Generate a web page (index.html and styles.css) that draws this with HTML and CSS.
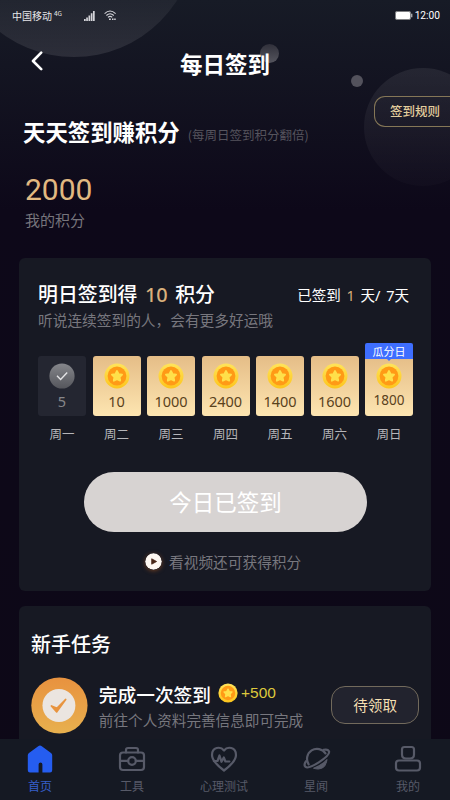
FILE: index.html
```html
<!DOCTYPE html>
<html lang="zh-CN">
<head>
<meta charset="utf-8">
<title>每日签到</title>
<link rel="stylesheet" href="styles.css">
</head>
<body>
<svg class="defs" width="0" height="0" aria-hidden="true">
  <defs>
    <linearGradient id="rim" x1="0" y1="0" x2="0" y2="1"><stop offset="0" stop-color="#ffe45a"/><stop offset="1" stop-color="#fdc51c"/></linearGradient>
    <linearGradient id="grey" x1="0" y1="0" x2="0" y2="1"><stop offset="0" stop-color="#85868b"/><stop offset="1" stop-color="#55565c"/></linearGradient>
    <linearGradient id="orange" x1="0" y1="0" x2="0" y2="1"><stop offset="0" stop-color="#e8923f"/><stop offset="1" stop-color="#e8b04e"/></linearGradient>
    <symbol id="coin" viewBox="0 0 26 26">
      <circle cx="13" cy="13" r="12.5" fill="url(#rim)"/>
      <circle cx="13" cy="13" r="9.4" fill="#ff9a16"/>
      <path d="M13 8l1.6 3.2 3.5.5-2.5 2.5.6 3.5-3.2-1.6-3.2 1.6.6-3.5-2.5-2.5 3.5-.5z" fill="#ffe04a" stroke="#ffe04a" stroke-width="1.8" stroke-linejoin="round"/>
    </symbol>
  </defs>
</svg>
<div class="screen">
  <div class="orb orb-big"></div>
  <div class="orb orb-small"></div>
  <div class="orb orb-dot"></div>
  <div class="orb orb-right"></div>

  <div class="status">
    <span class="carrier">中国移动</span><span class="net">4G</span>
    <svg class="signal" width="11" height="10" viewBox="0 0 11 10" fill="#d5d5da"><path d="M0 8h1.7v2H0zM2.2 6.5h1.7V10H2.2zM4.5 4.5h1.7V10H4.5zM6.8 2.3h1.7V10H6.8zM9 0h1.7v10H9z"/></svg>
    <svg class="wifi" width="13" height="11" viewBox="0 0 13 11" fill="none" stroke="#d5d5da" stroke-width="1.1"><path d="M.6 3.6Q6-1.6 11.6 3.6M2.4 5.5Q6 2 9.8 5.5M4 7.3Q6 5.5 8.2 7.3"/><path d="M5 9.2h1.8M8 9.2h1.5M10.2 9.2h1.5" stroke-width="1.6"/></svg>
    <svg class="battery" width="18" height="9" viewBox="0 0 18 9"><rect x=".4" y=".4" width="15.2" height="8.2" rx="1.5" fill="none" stroke="#aaa" stroke-width=".8"/><rect x="1" y="1" width="14" height="7" rx=".8" fill="#fff"/><path d="M16.3 2.7h1v3.6h-1z" fill="#ddd"/></svg>
    <span class="clock">12:00</span>
  </div>

  <header class="header">
    <svg class="back" width="12" height="20" viewBox="0 0 12 20"><path d="M10.2 1.6L2 10l8.2 8.2" fill="none" stroke="#fff" stroke-width="2.6" stroke-linecap="round" stroke-linejoin="round"/></svg>
    <h1>每日签到</h1>
  </header>

  <div class="rules-row"><a class="rules">签到规则</a></div>
  <div class="slogan"><h2>天天签到赚积分</h2><span>(每周日签到积分翻倍)</span></div>
  <div class="points">2000</div>
  <div class="points-label">我的积分</div>

  <section class="card checkin">
    <div class="card-top">
      <h3>明日签到得 <b>10</b> 积分</h3>
      <p class="progress">已签到 <b>1</b> 天/ 7天</p>
    </div>
    <p class="sub">听说连续签到的人，会有更多好运哦</p>
    <div class="days">
      <div class="day"><div class="tile done"><svg width="26" height="26" viewBox="0 0 26 26"><circle cx="13" cy="13" r="12.6" fill="url(#grey)"/><path d="M8 12.8l3.6 3.6 6.6-6.8" fill="none" stroke="#e4e4e6" stroke-width="1.4"/></svg><i>5</i></div><span>周一</span></div>
      <div class="day"><div class="tile"><svg width="26" height="26"><use href="#coin"/></svg><i>10</i></div><span>周二</span></div>
      <div class="day"><div class="tile"><svg width="26" height="26"><use href="#coin"/></svg><i>1000</i></div><span>周三</span></div>
      <div class="day"><div class="tile"><svg width="26" height="26"><use href="#coin"/></svg><i>2400</i></div><span>周四</span></div>
      <div class="day"><div class="tile"><svg width="26" height="26"><use href="#coin"/></svg><i>1400</i></div><span>周五</span></div>
      <div class="day"><div class="tile"><svg width="26" height="26"><use href="#coin"/></svg><i>1600</i></div><span>周六</span></div>
      <div class="day"><div class="tile last"><em class="tag">瓜分日</em><svg width="26" height="26"><use href="#coin"/></svg><i>1800</i></div><span>周日</span></div>
    </div>
    <button class="signed">今日已签到</button>
    <div class="video">
      <svg width="17" height="17" viewBox="0 0 17 17"><circle cx="8.5" cy="8.5" r="8.3" fill="#fff8f2"/><path d="M6.7 5.8v5.4l4.9-2.7z" fill="#4a2718" stroke="#4a2718" stroke-width=".8" stroke-linejoin="round"/></svg>
      <span>看视频还可获得积分</span>
    </div>
  </section>

  <section class="card tasks">
    <h3>新手任务</h3>
    <div class="task">
      <svg class="medal" width="57" height="57" viewBox="0 0 57 57"><circle cx="28.5" cy="28.5" r="28.2" fill="url(#orange)"/><circle cx="28" cy="28.5" r="16.5" fill="#ebe5e0"/><path d="M20.5 29l5.3 5.8L34.7 22.5l-8.7 8.9z" fill="#e8943f" stroke="#e8943f" stroke-width="1.8" stroke-linejoin="round"/></svg>
      <div class="task-text">
        <div class="task-title"><strong>完成一次签到</strong><svg width="20" height="20"><use href="#coin"/></svg><span>+500</span></div>
        <p>前往个人资料完善信息即可完成</p>
      </div>
      <button class="claim">待领取</button>
    </div>
  </section>

  <nav class="tabs">
    <a class="tab active"><svg width="30" height="30" viewBox="0 0 30 30"><path d="M13.2 2.2q1.8-1.3 3.6 0l9.2 6.7q1.2.9 1.2 2.4v15q0 2.2-2.2 2.2h-7.6v-8q0-2.1-1.9-2.1t-1.9 2.1v8H5q-2.2 0-2.2-2.2v-15q0-1.5 1.2-2.4z" fill="#255df0"/></svg><span>首页</span></a>
    <a class="tab"><svg width="30" height="30" viewBox="0 0 30 30"><g><path d="M9 8.5V6q0-2 2-2h8q2 0 2 2v2.5"/><rect x="3" y="8.5" width="24" height="17.5" rx="3"/><path d="M3 16.8h8.2M18.8 16.8H27"/><circle cx="15" cy="17" r="3.8"/></g></svg><span>工具</span></a>
    <a class="tab"><svg width="30" height="30" viewBox="0 0 30 30"><g><path d="M15 6.5C11.5 2 3 3 3 11c0 6 6 11 12 15.500 6-4.500 12-9.500 12-15.500 0-8-8.500-9-12-4.500z"/><path d="M4.800 17h3.700l2-5.500 2 6.300 2.300-4.300 1.600 4h4"/></g></svg><span>心理测试</span></a>
    <a class="tab"><svg width="30" height="30" viewBox="0 0 30 30"><g transform="translate(15.500 14) rotate(-33)"><path d="M-10 1A10 10 0 0 1 10 1"/><path d="M-10.500-3C-13-2-14.500 0-14 1.500-12.500 6 12.500 6 14 1.500 14.500 0 13-2 10.500-3"/><path class="solid" d="M-8 7Q0 9 8 7 4 11.500 0 11.500T-8 7z" stroke-width="1"/></g></svg><span>星闻</span></a>
    <a class="tab"><svg width="30" height="30" viewBox="0 0 30 30"><g><path d="M11.500 3h7q2.500 0 2.500 2.500v5q0 4-4 4h-4q-4 0-4-4v-5Q9 3 11.500 3z"/><rect x="3" y="16.500" width="24" height="10" rx="3"/></g></svg><span>我的</span></a>
  </nav>
</div>
</body>
</html>
```
FILE: styles.css
```css
* { box-sizing: border-box; margin: 0; padding: 0; }
body { background: #0d0817; font-family: "Noto Sans CJK SC", sans-serif; color: #fff; }
i, em { font-style: normal; }
.defs { position: absolute; }
.screen {
  position: relative;
  display: flex;
  flex-direction: column;
  width: 450px;
  height: 800px;
  overflow: hidden;
  background: linear-gradient(#171b26 0, #0d0819 210px, #0d0817 100%);
}
.screen > * { flex: none; position: relative; }
.screen > .orb { position: absolute; border-radius: 50%; }
.orb-big { left: -48px; top: -187px; width: 244px; height: 244px; background: linear-gradient(rgba(255,255,255,.03) 70%, rgba(255,255,255,.1)); }
.orb-small { left: 260px; top: 44px; width: 19px; height: 19px; background: linear-gradient(#30303a, #55555e); }
.orb-dot { left: 351px; top: 75px; width: 12px; height: 12px; background: #53525c; }
.orb-right { left: 364px; top: 68px; width: 118px; height: 118px; background: linear-gradient(rgba(255,255,255,.075), rgba(255,255,255,.015)); }

.status { display: flex; align-items: center; height: 30px; padding: 1px 10px 0 12px; font-size: 10px; line-height: 30px; color: #e6e6e9; }
.net { font-size: 6.5px; line-height: 8px; margin: 0 22px 5px 2px; }
.wifi { margin-left: 9px; }
.battery { margin-left: auto; margin-right: 2px; }
.clock { font-family: Roboto, sans-serif; font-size: 10.2px; color: #fff; }

.header { display: flex; align-items: center; justify-content: center; height: 66px; padding-bottom: 1px; }
.header .back { position: absolute; left: 31px; top: 21px; }
.header h1 { font-size: 22.5px; font-weight: 700; line-height: 32px; }

.rules-row { display: flex; justify-content: flex-end; height: 20px; }
.rules { height: 31px; padding: 0 10px 0 15px; border: 1px solid #857757; border-right: 0; border-radius: 11px 0 0 11px; font-size: 12.5px; font-weight: 500; line-height: 28px; color: #e3cd9d; }

.slogan { display: flex; align-items: center; height: 32px; margin-top: -1px; padding-left: 23px; }
.slogan h2 { font-size: 22.4px; font-weight: 700; line-height: 32px; }
.slogan span { margin: 6px 0 0 8px; font-size: 12.5px; color: #56545d; }
.points { height: 36px; margin: 25px 0 0 25px; font-family: Roboto, sans-serif; font-size: 30px; line-height: 36px; color: #e2b981; }
.points-label { height: 20px; margin: 2px 0 0 25px; font-size: 15px; line-height: 20px; color: #77757c; }

.card { width: 412px; margin-left: 19px; border-radius: 6px; background: #171923; }
.checkin { height: 333px; margin-top: 28px; padding: 21px 19px 0; }
.card-top { display: flex; justify-content: space-between; align-items: center; height: 30px; padding-right: 3px; }
.card-top h3 { font-size: 19.9px; font-weight: 500; line-height: 30px; word-spacing: 3px; }
.card-top b { font-family: "Noto Sans", sans-serif; font-weight: 500; color: #d9b07c; }
.progress { padding-top: 1px; font-family: "Noto Sans", "Noto Sans CJK SC", sans-serif; font-size: 14.5px; line-height: 30px; word-spacing: 2px; }
.progress b { font-weight: 400; }
.sub { height: 22px; font-size: 14.7px; line-height: 22px; color: #77777e; }
.days { display: flex; justify-content: space-between; width: 375px; margin-top: 25px; }
.day { display: flex; flex-direction: column; align-items: center; width: 48px; }
.tile { position: relative; display: flex; flex-direction: column; align-items: center; width: 48px; height: 60px; padding-top: 7px; border-radius: 3px; background: linear-gradient(#e5bd87, #fde5b1); }
.tile i { height: 24px; font-family: "Noto Sans", sans-serif; font-size: 14.5px; line-height: 24px; color: #5a421c; }
.done { background: #242631; }
.tile.done i { color: #87878b; }
.tile.last i { font-size: 13.5px; line-height: 23px; }
.tag { position: absolute; left: 0; top: -13px; width: 48px; height: 16px; border-radius: 2px 2px 0 0; background: #3e6eff; font-size: 11px; line-height: 16px; text-align: center; }
.tag::after { content: ""; position: absolute; left: 22px; top: 16px; border: 2px solid transparent; border-top-color: #3e6eff; border-bottom: 0; }
.day span { margin-top: 8px; font-size: 12.5px; line-height: 20px; color: #b5b5b9; }
.signed { display: block; width: 283px; height: 60px; margin: 28px 0 0 46px; border: 0; border-radius: 30px; background: #d7d3d2; font-family: inherit; font-size: 22.5px; line-height: 58px; padding-bottom: 2px; color: #fff; }
.video { display: flex; align-items: center; height: 22px; margin: 18px 0 0 107px; gap: 7px; font-size: 14.7px; color: #77777e; }
.video svg { border-radius: 50%; box-shadow: 0 1px 4px #6b3c20; }

.tasks { height: 200px; margin-top: 15px; padding: 22px 12px 0; }
.tasks h3 { font-size: 20px; font-weight: 500; line-height: 32px; }
.task { display: flex; margin-top: 17px; }
.task-text { width: 233px; margin-left: 11px; padding-top: 4px; }
.task-title { display: flex; align-items: center; height: 24px; font-size: 18.7px; }
.task-title strong { font-weight: 500; white-space: nowrap; }
.task-title svg { margin-left: 7px; }
.task-title span { margin-left: 3px; font-family: "Liberation Sans", sans-serif; font-size: 15.5px; color: #ddc83c; }
.task-text p { margin-top: 4px; font-size: 14.6px; line-height: 22px; color: #77777e; white-space: nowrap; }
.claim { width: 88px; height: 38px; margin-top: 9px; border: 1px solid #726a5c; border-radius: 14px; background: #22232e; font-family: inherit; font-size: 14.6px; line-height: 36px; color: #f3dfb2; }

.screen > .tabs { position: absolute; left: 0; bottom: 0; display: flex; width: 450px; height: 61px; padding: 5px 0 0; background: #151923; }
.tab { display: flex; flex-direction: column; align-items: center; width: 92px; flex: none; font-size: 12px; color: #575a68; }
.tab:first-child { margin-left: -6px; }
.tab span { margin-top: 3px; line-height: 18px; white-space: nowrap; }
.tab g { fill: none; stroke: #575a68; stroke-width: 2.2; stroke-linejoin: round; stroke-linecap: round; }
.tab .solid { fill: #575a68; }
.tab.active { color: #355fc9; }
```
